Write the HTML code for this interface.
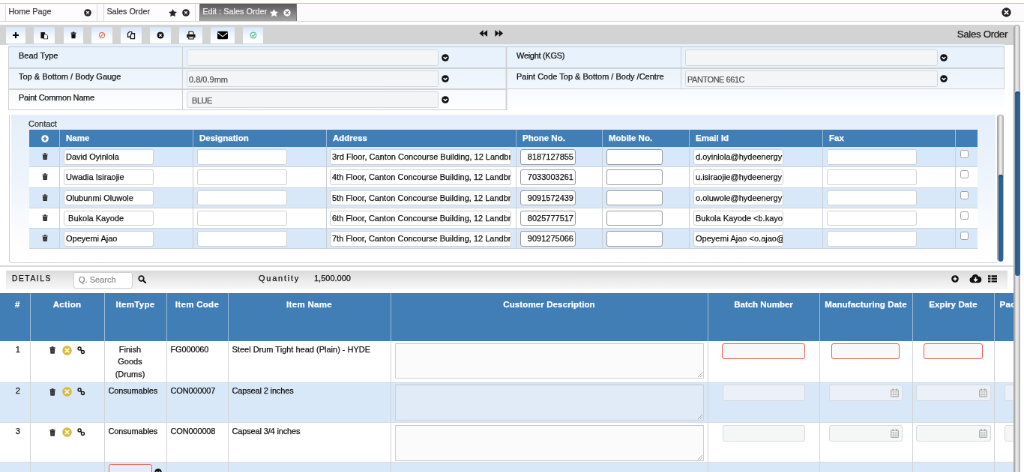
<!DOCTYPE html>
<html lang="en">
<head>
<meta charset="utf-8">
<title>Edit : Sales Order</title>
<style>
html,body{margin:0;padding:0;width:1024px;height:472px;overflow:hidden;background:#fff}
*{box-sizing:border-box}
#app{position:absolute;left:0;top:0;width:1366px;height:630px;transform:scale(.749634);transform-origin:0 0;will-change:transform;-webkit-font-smoothing:antialiased;-webkit-text-stroke:.25px;font:11px "Liberation Sans",sans-serif;color:#1c1c1c;overflow:hidden;background:#fff}
.abs{position:absolute}
svg{display:block}
/* top tabs */
#topline{left:0;top:4px;width:1366px;height:1px;background:#f6b68c}
#tabbar{left:0;top:5px;width:1366px;height:24px;background:#fbfbfb;border-bottom:1px solid #d6d6d6}
.tab{position:absolute;top:0;height:23px;border-left:1px solid #d9d9d9;border-right:1px solid #d9d9d9;background:#fdfdfd;font-size:10.800px;line-height:21.400px;padding-left:3.400px;color:#3a3a3a;white-space:nowrap}
.tab.on{background:linear-gradient(#575757,#7e7e7e 50%,#a6a6a6);color:#ececec;border-color:#777;font-size:10.900px;padding-left:3.300px}
.tab svg{position:absolute;top:6px}
/* toolbar */
#toolbar{left:0;top:33px;width:1352px;height:26.600px;background:#d3d3d3}
.tb{position:absolute;top:3px;height:22px;background:linear-gradient(#d6e6f8,#f3f8fe 55%,#fff);border-radius:1px}
.tb svg{position:absolute;left:50%;top:50%;transform:translate(-50%,-50%)}
#title{right:8px;top:0;height:26px;line-height:26px;font-size:13.400px;letter-spacing:-.380px;color:#1a1a1a}
/* form */
#form{left:11px;top:59px;width:1329px;height:88px}
#form div{position:absolute}
.fr{left:0;width:1329px}
.hl{left:0;width:1329px;background:#d1d1d1}
.vl{width:1px;background:#cfcfcf;top:3px;height:58px}
.fl{font-size:11px;line-height:13px;color:#111;white-space:nowrap}
.fi{width:336px;height:22px;border:1px solid #d2d6da;border-radius:2.500px;background:#f4f5f7;box-shadow:0 0 1px #fff;font-size:11px;line-height:19px;padding:1.700px 0 0 2px;color:#555;white-space:pre}
#form svg{position:absolute}
/* contact */
#contact{left:12px;top:153px;width:1319px;height:198px;border-left:1px solid #cfcfcf;border-bottom:1px solid #cfcfcf;border-radius:0 0 0 4px}
#contact .bg{position:absolute;left:2px;top:0;right:3px;bottom:1px;background:linear-gradient(#e4eefa,#eef4fc 45%,#fdfdfe 85%,#fff)}
#contact .lbl{position:absolute;left:25px;top:5.700px;font-size:11px;line-height:13px;color:#333}
#ct{position:absolute;left:26px;top:20px;width:1265px;border-collapse:separate;border-spacing:0;table-layout:fixed}
#ct th{height:23.300px;background:#407eb5;color:#fff;font-weight:bold;font-size:11.5px;line-height:13px;text-align:left;padding:0 0 1.200px 8px;border-left:1px solid #9dbbd8;vertical-align:middle}
#ct th:first-child{border-left:0;padding:0}
#ct td{height:27.200px;padding:0;border-left:1px solid #c9ced4;border-bottom:1px solid #ccd3da;position:relative;background:#fff}
#ct td:first-child{border-left:0}
#ct tr.a td{background:#d9e8f8}
.ci{position:absolute;left:5px;top:3px;height:20.500px;width:120px;background:#fff;border:1px solid #cfcfcf;border-radius:3px;font-size:11px;line-height:19.700px;padding:0 1px 0 2px;white-space:pre;overflow:hidden;color:#111}
.ci.n{border-color:#9a9a9a;text-align:right;width:74px;padding-right:2px}
.ci.w{width:242px;left:4px}
.ci.l4{left:4px}
.ci.m{width:75px}
.cb{position:absolute;left:5.500px;top:4px;width:11px;height:11px;border:1px solid #a0a0a0;border-radius:2.500px;background:#fff}
.tr{position:absolute;left:17px;top:8px}
/* details */
#hr{left:0;top:354px;width:1352px;height:2px;background:#d9d9d9}
#dbar{left:8px;top:361px;width:1336px;height:25px;background:linear-gradient(#dadada,#ebebeb 50%,#f7f7f7);font-size:11px;line-height:25px;color:#111}
#dbar span{position:absolute;top:0;white-space:nowrap}
#srch{position:absolute;left:90px;top:2px;width:79px;height:21.500px;border:1px solid #d0d0d0;border-radius:3px;background:#fff;font-size:11px;line-height:19px;padding-left:6px;color:#8e8e8e}
#dwrap{left:0;top:391px;width:1352px;height:239px;overflow:hidden}
#dt{position:absolute;left:0;top:0;width:1500px;border-collapse:collapse;table-layout:fixed}
#dt th{height:63.500px;background:#407eb5;color:#fff;font-weight:bold;font-size:11.500px;letter-spacing:.300px;text-align:center;padding:9.400px 0 0;border-left:1px solid #9dbbd8;vertical-align:top;white-space:nowrap;overflow:hidden}
#dt th.n0{letter-spacing:0}
#dt th.n1{letter-spacing:.120px}
#dt th:first-child{border-left:0;padding-left:7px}
#dt td{padding:3.400px 0 0;border-left:1px solid #d3d3d3;border-bottom:1px solid #d9d9d9;position:relative;background:#fff;vertical-align:top;font-size:11px;line-height:16.5px;text-align:center;color:#111}
#dt td:first-child{border-left:0;padding-left:8px}
#dt td.it{padding-left:5px;padding-right:20px;letter-spacing:-.150px;white-space:nowrap}
#dt tr.a td{background:#d9e8f8}
#dt td.lf{text-align:left;padding-left:5px;letter-spacing:-.150px}
#dt tr.a .ta{background:rgba(246,246,246,.28)}
.ta{position:absolute;left:5px;top:3.400px;width:412px;height:47.500px;border:1px solid #cfcfcf;border-top-color:#c4c4c4;background:rgba(246,246,246,.45);border-radius:1px}
.ta:after{content:"";position:absolute;right:1px;bottom:1px;width:7px;height:7px;background:linear-gradient(135deg,transparent 52%,#a8a8a8 52%,#a8a8a8 60%,transparent 60%,transparent 74%,#a8a8a8 74%,#a8a8a8 82%,transparent 82%)}
.di{position:absolute;top:2.500px;height:22px;border:1px solid #d7dade;border-radius:3px;background:#f5f6f6}
#dt tr.a .di{background:#ebf0f9}
.di.rq{border-color:#ea5f54;background:#f8f8f8;top:3px;height:21.300px}
.cal{position:absolute;right:4px;top:4.300px}
.act{position:absolute;top:6px}
/* scrollbars */
.sbt{border-radius:4.500px;background:linear-gradient(90deg,#adadad,#9d9d9d 12%,#d6d6d6 30%,#ececec 50%,#d9d9d9 72%,#ababab 90%,#bdbdbd);box-shadow:inset 0 1px 0 #9f9f9f}
.sbh{border-radius:3.500px;background:linear-gradient(90deg,#3f6e9b,#275a8b 22%,#2f6598 55%,#2a5d8f 80%,#456f9a);box-shadow:inset 0 2px 1px #1d4c79}
</style>
</head>
<body>
<div id="app">
<div id="topline" class="abs"></div>
<div id="tabbar" class="abs">
  <div class="tab" style="left:7px;width:123px">Home Page
    <svg style="left:104px;top:6.5px" width="10" height="10" viewBox="0 0 12 12"><circle cx="6" cy="6" r="5.800" fill="#222"/><path d="M4.200 4.200l3.600 3.600M7.800 4.200l-3.600 3.600" stroke="#fff" stroke-width="1.700" stroke-linecap="round"/></svg>
  </div>
  <div class="tab" style="left:138px;width:123px">Sales Order
    <svg style="left:86px;top:6.5px" width="11" height="10" viewBox="0 0 12 11"><path d="M6 0l1.8 3.7 4.2.6-3 2.9.7 4.1L6 9.3 2.3 11.3 3 7.2 0 4.3l4.2-.6z" fill="#222"/></svg>
    <svg style="left:104px;top:6.5px" width="10" height="10" viewBox="0 0 12 12"><circle cx="6" cy="6" r="5.800" fill="#222"/><path d="M4.200 4.200l3.600 3.600M7.800 4.200l-3.600 3.600" stroke="#fff" stroke-width="1.700" stroke-linecap="round"/></svg>
  </div>
  <div class="tab on" style="left:266px;width:130px">Edit : Sales Order
    <svg style="left:93px;top:6.5px" width="11" height="10" viewBox="0 0 12 11"><path d="M6 0l1.8 3.7 4.2.6-3 2.9.7 4.1L6 9.3 2.3 11.3 3 7.2 0 4.3l4.2-.6z" fill="#fff"/></svg>
    <svg style="left:111px;top:6.5px" width="10" height="10" viewBox="0 0 12 12"><circle cx="6" cy="6" r="5.6" fill="#fff"/><path d="M4 4l4 4M8 4l-4 4" stroke="#777" stroke-width="1.7" stroke-linecap="round"/></svg>
  </div>
  <svg class="abs" style="left:1335.800px;top:5px" width="13" height="13" viewBox="0 0 12 12"><circle cx="6" cy="6" r="5.7" fill="#222"/><path d="M4 4l4 4M8 4l-4 4" stroke="#fff" stroke-width="1.8" stroke-linecap="round"/></svg>
</div>

<div id="toolbar" class="abs">
  <div class="tb" style="left:8px;width:26px"><svg width="9" height="9" viewBox="0 0 10 10"><path d="M5 .5v9M.5 5h9" stroke="#000" stroke-width="2.4"/></svg></div>
  <div class="tb" style="left:45px;width:28px"><svg width="11" height="11" viewBox="0 0 12 12"><path d="M1 1.5h6v9H1z" fill="#111"/><path d="M5.5 4.5h3.2l2.3 2.3v4.7H5.5z" fill="#fff" stroke="#111" stroke-width="1"/></svg></div>
  <div class="tb" style="left:85px;width:26px"><svg width="8.500" height="10" viewBox="0 0 10 11"><path d="M1 2.2h8M3.6 1h2.8" stroke="#111" stroke-width="1.4"/><path d="M1.6 3.4h6.8l-.5 7.1H2.1z" fill="#111"/></svg></div>
  <div class="tb" style="left:122px;width:28px"><svg width="9" height="9" viewBox="0 0 11 11"><circle cx="5.5" cy="5.5" r="4.4" fill="none" stroke="#ea6a5c" stroke-width="1.4"/><path d="M2.6 8.4l5.8-5.8" stroke="#ea6a5c" stroke-width="1.4"/></svg></div>
  <div class="tb" style="left:161px;width:28px"><svg width="11" height="11" viewBox="0 0 12 12"><path d="M1 3.400L3.400 1h3.400v7.400H1z" fill="none" stroke="#1a1a1a" stroke-width="1.500"/><path d="M5.200 5.600L7.200 3.600h3.800v7.600H5.200z" fill="#eef4fc" stroke="#1a1a1a" stroke-width="1.500"/></svg></div>
  <div class="tb" style="left:200px;width:28px"><svg width="9.500" height="9.500" viewBox="0 0 12 12"><circle cx="6" cy="6" r="5.800" fill="#111"/><path d="M4.300 4.300l3.400 3.400M7.700 4.300l-3.400 3.400" stroke="#fff" stroke-width="1.600" stroke-linecap="round"/></svg></div>
  <div class="tb" style="left:239px;width:31px"><svg width="12.5" height="11.5" viewBox="0 0 14 13"><path d="M3.5 5V1h5.5l1.5 1.5V5" fill="#fff" stroke="#111" stroke-width="1.3"/><path d="M.5 5.2h13v5h-2.2V8H2.700v2.200H.5z" fill="#111"/><path d="M3.300 8.600h7.400v3.600H3.300z" fill="#fff" stroke="#111" stroke-width="1.2"/></svg></div>
  <div class="tb" style="left:281px;width:32px"><svg width="14" height="11" viewBox="0 0 15 11" preserveAspectRatio="none"><rect x="0" y="0" width="15" height="11" rx="1.800" fill="#000"/><path d="M.6 2.200l6.900 5.200 6.900-5.200" fill="none" stroke="#fff" stroke-width="1.1"/></svg></div>
  <div class="tb" style="left:324px;width:27px"><svg width="9.5" height="9.5" viewBox="0 0 11 11"><circle cx="5.500" cy="5.500" r="4.400" fill="none" stroke="#69c096" stroke-width="1.700"/><path d="M3.300 5.600l1.700 1.600 2.900-3.100" fill="none" stroke="#69c096" stroke-width="1.700"/></svg></div>
  <svg class="abs" style="left:639px;top:6.800px" width="11.500" height="9" viewBox="0 0 14 11"><path d="M7 0v11L.5 5.500zM13.500 0v11L7 5.500z" fill="#111"/></svg>
  <svg class="abs" style="left:660px;top:6.800px" width="11.500" height="9" viewBox="0 0 14 11"><path d="M.5 0v11L7 5.500zM7 0v11l6.500-5.500z" fill="#111"/></svg>
  <div id="title" class="abs">Sales Order</div>
</div>

<div id="form" class="abs">
<div class="fr" style="top:0;height:31px;background:#e8f2fc"></div>
<div class="fr" style="top:32px;height:28px;background:linear-gradient(#eaf3fc,#f2f7fd)"></div>
<div class="fr" style="top:60px;height:27px;background:linear-gradient(#f6f9fe,#fff)"></div>
<div class="hl" style="top:3px;height:1px;background:#bfc8d2"></div>
<div class="hl" style="top:30.500px;height:2px"></div>
<div class="hl" style="top:59px;height:2px;width:666px"></div>
<div class="hl" style="top:59px;height:1px;left:666px;width:663px"></div>
<div class="hl" style="top:86.500px;height:1px;width:666px;background:#cdcdcd"></div>
<div class="vl" style="left:0;height:84px"></div>
<div class="vl" style="left:232px;height:84px"></div>
<div class="vl" style="left:664px;width:2px;height:84px;background:#d1d1d1;transform:translateX(-.500px)"></div>
<div class="vl" style="left:897px;height:57px"></div>
<div class="vl" style="left:1328px;height:57px"></div>
<div class="fl" style="left:14px;top:9px">Bead Type</div><div class="fi" style="left:238px;top:7px"></div><svg style="left:578px;top:12.7px" width="10" height="10" viewBox="0 0 10 10"><circle cx="5" cy="5" r="4.800" fill="#111"/><path d="M2.600 4l2.400 2.400L7.400 4" fill="none" stroke="#fff" stroke-width="1.500"/></svg>
<div class="fl" style="left:678px;top:9px;letter-spacing:-.300px">Weight (KGS)</div><div class="fi" style="left:903px;top:7px;width:337px"></div><svg style="left:1243px;top:12.7px" width="10" height="10" viewBox="0 0 10 10"><circle cx="5" cy="5" r="4.800" fill="#111"/><path d="M2.600 4l2.400 2.400L7.400 4" fill="none" stroke="#fff" stroke-width="1.500"/></svg>
<div class="fl" style="left:14px;top:37.2px">Top &amp; Bottom / Body Gauge</div><div class="fi" style="left:238px;top:35px">0.8/0.9mm</div><svg style="left:578px;top:40.7px" width="10" height="10" viewBox="0 0 10 10"><circle cx="5" cy="5" r="4.800" fill="#111"/><path d="M2.600 4l2.400 2.400L7.400 4" fill="none" stroke="#fff" stroke-width="1.500"/></svg>
<div class="fl" style="left:678px;top:37.2px">Paint Code Top &amp; Bottom / Body /Centre</div><div class="fi" style="left:903px;top:35px;width:337px;letter-spacing:-.450px">PANTONE 661C</div><svg style="left:1243px;top:40.7px" width="10" height="10" viewBox="0 0 10 10"><circle cx="5" cy="5" r="4.800" fill="#111"/><path d="M2.600 4l2.400 2.400L7.400 4" fill="none" stroke="#fff" stroke-width="1.500"/></svg>
<div class="fl" style="left:14px;top:65px;letter-spacing:-.250px">Paint Common Name</div><div class="fi" style="left:238px;top:63px;padding-left:6px;letter-spacing:-.450px">BLUE</div><svg style="left:578px;top:68.7px" width="10" height="10" viewBox="0 0 10 10"><circle cx="5" cy="5" r="4.800" fill="#111"/><path d="M2.600 4l2.400 2.400L7.400 4" fill="none" stroke="#fff" stroke-width="1.500"/></svg>
</div>
<div id="contact" class="abs"><div class="bg"></div><div class="lbl">Contact</div>
<table id="ct"><colgroup><col style="width:40px"><col style="width:178px"><col style="width:178px"><col style="width:253px"><col style="width:115px"><col style="width:116px"><col style="width:178px"><col style="width:177px"><col style="width:30px"></colgroup>
<tr><th><svg style="margin:0 0 0 16px;position:relative;top:.500px" width="10" height="10" viewBox="0 0 10 10"><circle cx="5" cy="5" r="4.800" fill="#fff"/><path d="M5 2.300v5.400M2.300 5h5.400" stroke="#407eb5" stroke-width="1.600"/></svg></th><th>Name</th><th>Designation</th><th>Address</th><th>Phone No.</th><th>Mobile No.</th><th>Email Id</th><th>Fax</th><th></th></tr>
<tr class="a"><td><svg class="tr" width="8.200" height="9.500" viewBox="0 0 9 10"><path d="M.500 2h8M3 .800h3" stroke="#2b2b2b" stroke-width="1.300"/><path d="M1.100 3h6.800l-.500 6.600H1.600z" fill="#2b2b2b"/><path d="M3.200 4.400v4M4.500 4.400v4M5.800 4.400v4" stroke="#666" stroke-width=".700"/></svg></td><td><div class="ci">David Oyinlola</div></td><td><div class="ci"></div></td><td><div class="ci w">3rd Floor, Canton Concourse Building, 12 Landbr</div></td><td><div class="ci n">8187127855</div></td><td><div class="ci n m"></div></td><td><div class="ci">d.oyinlola@hydeenergy</div></td><td><div class="ci"></div></td><td><div class="cb"></div></td></tr>
<tr><td><svg class="tr" width="8.200" height="9.500" viewBox="0 0 9 10"><path d="M.500 2h8M3 .800h3" stroke="#2b2b2b" stroke-width="1.300"/><path d="M1.100 3h6.800l-.500 6.600H1.600z" fill="#2b2b2b"/><path d="M3.200 4.400v4M4.500 4.400v4M5.800 4.400v4" stroke="#666" stroke-width=".700"/></svg></td><td><div class="ci">Uwadia Isiraojie</div></td><td><div class="ci"></div></td><td><div class="ci w">4th Floor, Canton Concourse Building, 12 Landbr</div></td><td><div class="ci n">7033003261</div></td><td><div class="ci n m"></div></td><td><div class="ci">u.isiraojie@hydeenergy</div></td><td><div class="ci"></div></td><td><div class="cb"></div></td></tr>
<tr class="a"><td><svg class="tr" width="8.200" height="9.500" viewBox="0 0 9 10"><path d="M.500 2h8M3 .800h3" stroke="#2b2b2b" stroke-width="1.300"/><path d="M1.100 3h6.800l-.500 6.600H1.600z" fill="#2b2b2b"/><path d="M3.200 4.400v4M4.500 4.400v4M5.800 4.400v4" stroke="#666" stroke-width=".700"/></svg></td><td><div class="ci">Olubunmi Oluwole</div></td><td><div class="ci"></div></td><td><div class="ci w">5th Floor, Canton Concourse Building, 12 Landbr</div></td><td><div class="ci n">9091572439</div></td><td><div class="ci n m"></div></td><td><div class="ci">o.oluwole@hydeenergy</div></td><td><div class="ci"></div></td><td><div class="cb"></div></td></tr>
<tr><td><svg class="tr" width="8.200" height="9.500" viewBox="0 0 9 10"><path d="M.500 2h8M3 .800h3" stroke="#2b2b2b" stroke-width="1.300"/><path d="M1.100 3h6.800l-.500 6.600H1.600z" fill="#2b2b2b"/><path d="M3.200 4.400v4M4.500 4.400v4M5.800 4.400v4" stroke="#666" stroke-width=".700"/></svg></td><td><div class="ci"> Bukola Kayode</div></td><td><div class="ci"></div></td><td><div class="ci w">6th Floor, Canton Concourse Building, 12 Landbr</div></td><td><div class="ci n">8025777517</div></td><td><div class="ci n m"></div></td><td><div class="ci">Bukola Kayode &lt;b.kayo</div></td><td><div class="ci"></div></td><td><div class="cb"></div></td></tr>
<tr class="a"><td><svg class="tr" width="8.200" height="9.500" viewBox="0 0 9 10"><path d="M.500 2h8M3 .800h3" stroke="#2b2b2b" stroke-width="1.300"/><path d="M1.100 3h6.800l-.500 6.600H1.600z" fill="#2b2b2b"/><path d="M3.200 4.400v4M4.500 4.400v4M5.800 4.400v4" stroke="#666" stroke-width=".700"/></svg></td><td><div class="ci">Opeyemi Ajao</div></td><td><div class="ci"></div></td><td><div class="ci w">7th Floor, Canton Concourse Building, 12 Landbr</div></td><td><div class="ci n">9091275066</div></td><td><div class="ci n m"></div></td><td><div class="ci">Opeyemi Ajao &lt;o.ajao@</div></td><td><div class="ci"></div></td><td><div class="cb"></div></td></tr>
</table></div>
<div id="hr" class="abs"></div>
<div id="dbar" class="abs"><span style="left:8px;top:-2.500px;letter-spacing:1.600px;font-size:10.200px">DETAILS</span><div id="srch">Q. Search</div>
<svg class="abs" style="left:176px;top:5.700px" width="11" height="11" viewBox="0 0 11 11"><circle cx="4.500" cy="4.500" r="3.300" fill="none" stroke="#111" stroke-width="1.700"/><path d="M7 7l3.200 3.200" stroke="#111" stroke-width="2" stroke-linecap="round"/></svg>
<span style="left:337px;top:-2px;letter-spacing:1.750px">Quantity</span><span style="left:411px;top:-2px">1,500.000</span>
<svg class="abs" style="left:1260.600px;top:5.500px" width="10" height="10" viewBox="0 0 10 10"><circle cx="5" cy="5" r="4.800" fill="#111"/><path d="M5 2.400v5.200M2.400 5h5.200" stroke="#fff" stroke-width="1.600"/></svg>
<svg class="abs" style="left:1284.500px;top:4.200px" width="17" height="12.700" viewBox="0 0 16 12"><path d="M4 11.500a3.500 3.500 0 0 1-.600-6.950A4.200 4.200 0 0 1 11.500 3.600 4 4 0 0 1 12.300 11.500z" fill="#111"/><path d="M8 4.500v4M5.800 7L8 9.300 10.200 7" fill="none" stroke="#fff" stroke-width="1.500"/></svg>
<svg class="abs" style="left:1309.600px;top:6px" width="12.300" height="9.800" viewBox="0 0 12 10" preserveAspectRatio="none"><path d="M0 1.500h3.300M4.500 1.500h7.500M0 5h3.300M4.500 5h7.500M0 8.500h3.300M4.500 8.500h7.500" stroke="#111" stroke-width="2.400"/></svg>
</div>
<div id="dwrap" class="abs"><table id="dt"><colgroup><col style="width:40px"><col style="width:99px"><col style="width:83px"><col style="width:82px"><col style="width:217px"><col style="width:423px"><col style="width:149px"><col style="width:124px"><col style="width:109px"><col style="width:174px"></colgroup>
<tr><th>#</th><th>Action</th><th>ItemType</th><th>Item Code</th><th>Item Name</th><th class="n1">Customer Description</th><th class="n0">Batch Number</th><th class="n1">Manufacturing Date</th><th class="n1">Expiry Date</th><th style="text-align:left;padding-left:7px">Pac</th></tr>
<tr style="height:55px"><td>1</td><td><svg class="act" style="left:25.500px;top:7.500px" width="8.200" height="10" viewBox="0 0 9 11"><path d="M.500 2.200h8M3 .900h3" stroke="#2b2b2b" stroke-width="1.400"/><path d="M1 3.300h7l-.500 7.300H1.500z" fill="#2b2b2b"/><path d="M3.200 4.800v4.300M4.500 4.800v4.300M5.800 4.800v4.300" stroke="#666" stroke-width=".700"/></svg><svg class="act" style="left:42px;top:6.300px" width="13" height="13" viewBox="0 0 13 13"><circle cx="6.500" cy="6.500" r="6.300" fill="#d9ba3c"/><path d="M4.300 4.300l4.400 4.400M8.700 4.300L4.300 8.700" stroke="#fffbe6" stroke-width="1.900" stroke-linecap="round"/></svg><svg class="act" style="left:62.500px;top:7px" width="10.500" height="10.500" viewBox="0 0 12 12"><circle cx="3.500" cy="3.500" r="2.300" fill="none" stroke="#111" stroke-width="1.600"/><circle cx="8.500" cy="8.500" r="2.300" fill="none" stroke="#111" stroke-width="1.600"/><path d="M4.800 4.800l2.400 2.400" stroke="#111" stroke-width="1.600"/></svg></td><td class="it" style="letter-spacing:0;padding-left:6px">Finish<br>Goods<br>(Drums)</td><td class="lf">FG000060</td><td class="lf" style="letter-spacing:0">Steel Drum Tight head (Plain) - HYDE</td><td><div class="ta"></div></td><td><div class="di rq" style="left:18px;width:111px"></div></td><td><div class="di rq" style="left:15px;width:91px"></div></td><td><div class="di rq" style="left:14px;width:79px"></div></td><td></td></tr>
<tr class="a" style="height:54px"><td>2</td><td><svg class="act" style="left:25.500px;top:7.500px" width="8.200" height="10" viewBox="0 0 9 11"><path d="M.500 2.200h8M3 .900h3" stroke="#2b2b2b" stroke-width="1.400"/><path d="M1 3.300h7l-.500 7.300H1.500z" fill="#2b2b2b"/><path d="M3.200 4.800v4.300M4.500 4.800v4.300M5.800 4.800v4.300" stroke="#666" stroke-width=".700"/></svg><svg class="act" style="left:42px;top:6.300px" width="13" height="13" viewBox="0 0 13 13"><circle cx="6.500" cy="6.500" r="6.300" fill="#d9ba3c"/><path d="M4.300 4.300l4.400 4.400M8.700 4.300L4.300 8.700" stroke="#fffbe6" stroke-width="1.900" stroke-linecap="round"/></svg><svg class="act" style="left:62.500px;top:7px" width="10.500" height="10.500" viewBox="0 0 12 12"><circle cx="3.500" cy="3.500" r="2.300" fill="none" stroke="#111" stroke-width="1.600"/><circle cx="8.500" cy="8.500" r="2.300" fill="none" stroke="#111" stroke-width="1.600"/><path d="M4.800 4.800l2.400 2.400" stroke="#111" stroke-width="1.600"/></svg></td><td class="it">Consumables</td><td class="lf">CON000007</td><td class="lf">Capseal 2 inches</td><td><div class="ta"></div></td><td><div class="di" style="left:19px;width:110px"></div></td><td><div class="di" style="left:12px;width:98px"><svg class="cal" width="11" height="12" viewBox="0 0 11 12"><rect x=".600" y="2" width="9.800" height="9.400" rx="1" fill="#f4f4f4" stroke="#a8a8a8" stroke-width="1.100"/><path d="M.600 4.800h9.800M3.900 4.800v6.600M7.100 4.800v6.600M.600 8.100h9.800" stroke="#b4b4b4" stroke-width=".800"/><path d="M3.200 .500v2.600M7.800 .500v2.600" stroke="#9c9c9c" stroke-width="1.400"/></svg></div></td><td><div class="di" style="left:4px;width:100px"><svg class="cal" width="11" height="12" viewBox="0 0 11 12"><rect x=".600" y="2" width="9.800" height="9.400" rx="1" fill="#f4f4f4" stroke="#a8a8a8" stroke-width="1.100"/><path d="M.600 4.800h9.800M3.900 4.800v6.600M7.100 4.800v6.600M.600 8.100h9.800" stroke="#b4b4b4" stroke-width=".800"/><path d="M3.200 .500v2.600M7.800 .500v2.600" stroke="#9c9c9c" stroke-width="1.400"/></svg></div></td><td><div class="di" style="left:13px;width:99px"></div></td></tr>
<tr style="height:53px"><td>3</td><td><svg class="act" style="left:25.500px;top:7.500px" width="8.200" height="10" viewBox="0 0 9 11"><path d="M.500 2.200h8M3 .900h3" stroke="#2b2b2b" stroke-width="1.400"/><path d="M1 3.300h7l-.500 7.300H1.500z" fill="#2b2b2b"/><path d="M3.200 4.800v4.300M4.500 4.800v4.300M5.800 4.800v4.300" stroke="#666" stroke-width=".700"/></svg><svg class="act" style="left:42px;top:6.300px" width="13" height="13" viewBox="0 0 13 13"><circle cx="6.500" cy="6.500" r="6.300" fill="#d9ba3c"/><path d="M4.300 4.300l4.400 4.400M8.700 4.300L4.300 8.700" stroke="#fffbe6" stroke-width="1.900" stroke-linecap="round"/></svg><svg class="act" style="left:62.500px;top:7px" width="10.500" height="10.500" viewBox="0 0 12 12"><circle cx="3.500" cy="3.500" r="2.300" fill="none" stroke="#111" stroke-width="1.600"/><circle cx="8.500" cy="8.500" r="2.300" fill="none" stroke="#111" stroke-width="1.600"/><path d="M4.800 4.800l2.400 2.400" stroke="#111" stroke-width="1.600"/></svg></td><td class="it">Consumables</td><td class="lf">CON000008</td><td class="lf">Capseal 3/4 inches</td><td><div class="ta"></div></td><td><div class="di" style="left:19px;width:110px"></div></td><td><div class="di" style="left:12px;width:98px"><svg class="cal" width="11" height="12" viewBox="0 0 11 12"><rect x=".600" y="2" width="9.800" height="9.400" rx="1" fill="#f4f4f4" stroke="#a8a8a8" stroke-width="1.100"/><path d="M.600 4.800h9.800M3.900 4.800v6.600M7.100 4.800v6.600M.600 8.100h9.800" stroke="#b4b4b4" stroke-width=".800"/><path d="M3.200 .500v2.600M7.800 .500v2.600" stroke="#9c9c9c" stroke-width="1.400"/></svg></div></td><td><div class="di" style="left:4px;width:100px"><svg class="cal" width="11" height="12" viewBox="0 0 11 12"><rect x=".600" y="2" width="9.800" height="9.400" rx="1" fill="#f4f4f4" stroke="#a8a8a8" stroke-width="1.100"/><path d="M.600 4.800h9.800M3.900 4.800v6.600M7.100 4.800v6.600M.600 8.100h9.800" stroke="#b4b4b4" stroke-width=".800"/><path d="M3.200 .500v2.600M7.800 .500v2.600" stroke="#9c9c9c" stroke-width="1.400"/></svg></div></td><td><div class="di" style="left:13px;width:99px"></div></td></tr>
<tr class="a" style="height:54px"><td></td><td></td><td><div class="di rq" style="left:5px;width:58px;top:2px;background:#e6edf8"></div><svg class="abs" style="left:66.500px;top:8.200px" width="10" height="10" viewBox="0 0 10 10"><circle cx="5" cy="5" r="4.800" fill="#111"/><path d="M2.600 4l2.400 2.400L7.400 4" fill="none" stroke="#fff" stroke-width="1.500"/></svg></td><td></td><td></td><td></td><td></td><td></td><td></td><td></td></tr>
</table></div>
<div class="abs sbt" style="left:1352px;top:33px;width:9px;height:600px"></div>
<div class="abs sbh" style="left:1354.300px;top:122px;width:6.400px;height:246px"></div>
<div class="abs sbt" style="left:1330px;top:153px;width:9px;height:196px"></div>
<div class="abs sbh" style="left:1331.800px;top:232.500px;width:6.300px;height:116.500px"></div>
</div>
</body>
</html>
